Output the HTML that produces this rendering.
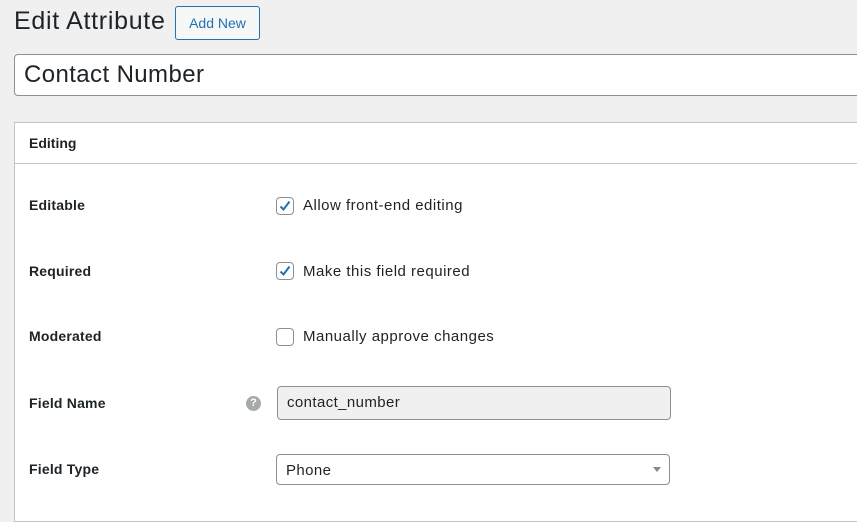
<!DOCTYPE html>
<html><head><style>
body{margin:0;width:857px;height:497px;background:#f0f0f1;font-family:"Liberation Sans",sans-serif;color:#1d2327;overflow:hidden;position:relative}
.a{position:absolute}
h1{position:absolute;left:14px;top:5px;margin:0;font-size:25px;letter-spacing:0.7px;font-weight:400;line-height:32px}
.btn{left:175px;top:6px;width:85px;height:34px;border:1px solid #2271b1;border-radius:3px;box-sizing:border-box;color:#2271b1;font-size:14px;line-height:32px;text-align:center;background:#f6f7f7}
.title{left:14px;top:54px;width:860px;height:42px;border:1px solid #8c8f94;border-radius:4px;background:#fff;box-sizing:border-box;font-size:24px;letter-spacing:0.4px;padding-left:9px;line-height:40px}
.box{left:14px;top:122px;width:860px;height:400px;border:1px solid #c3c4c7;background:#fff;box-sizing:border-box}
.hd{left:15px;top:123px;width:850px;height:41px;border-bottom:1px solid #c3c4c7;font-size:14px;font-weight:600;line-height:41px;padding-left:14px;box-sizing:border-box}
.lbl{left:29px;font-size:14px;font-weight:bold;letter-spacing:0.2px}
.cb{left:276px;width:18px;height:18px;border:1px solid #8c8f94;border-radius:4px;box-sizing:border-box;background:#fff}
.txt{left:303px;font-size:15px;letter-spacing:0.5px}
</style></head><body>
<h1>Edit Attribute</h1>
<div class="a btn">Add New</div>
<div class="a title">Contact Number</div>
<div class="a box"></div>
<div class="a hd">Editing</div>
<div class="a lbl" style="top:197px">Editable</div>
<div class="a cb" style="top:197px"><svg width="18" height="18" style="position:absolute;left:-1px;top:-1px"><path d="M4.5 9.5l3 3 6-8" stroke="#2271b1" stroke-width="2" fill="none"/></svg></div>
<div class="a txt" style="top:197px">Allow front-end editing</div>
<div class="a lbl" style="top:263px">Required</div>
<div class="a cb" style="top:262px"><svg width="18" height="18" style="position:absolute;left:-1px;top:-1px"><path d="M4.5 9.5l3 3 6-8" stroke="#2271b1" stroke-width="2" fill="none"/></svg></div>
<div class="a txt" style="top:263px">Make this field required</div>
<div class="a lbl" style="top:328px">Moderated</div>
<div class="a cb" style="top:328px"></div>
<div class="a txt" style="top:328px">Manually approve changes</div>
<div class="a lbl" style="top:395px">Field Name</div>
<div class="a" style="left:246px;top:396px;width:15px;height:15px;border-radius:50%;background:#a7aaad;color:#fff;font-size:11px;font-weight:bold;text-align:center;line-height:15px">?</div>
<div class="a" style="left:277px;top:386px;width:394px;height:34px;border:1px solid #8c8f94;border-radius:4px;background:#f0f0f1;box-sizing:border-box;font-size:15px;letter-spacing:0.4px;line-height:32px;padding-left:9px">contact_number</div>
<div class="a lbl" style="top:461px">Field Type</div>
<div class="a" style="left:276px;top:454px;width:394px;height:31px;border:1px solid #8c8f94;border-radius:4px;background:#fff;box-sizing:border-box;font-size:15px;letter-spacing:0.4px;line-height:31px;padding-left:9px">Phone<span style="position:absolute;right:8px;top:12px;border-left:4px solid transparent;border-right:4px solid transparent;border-top:5px solid #888"></span></div>
</body></html>
